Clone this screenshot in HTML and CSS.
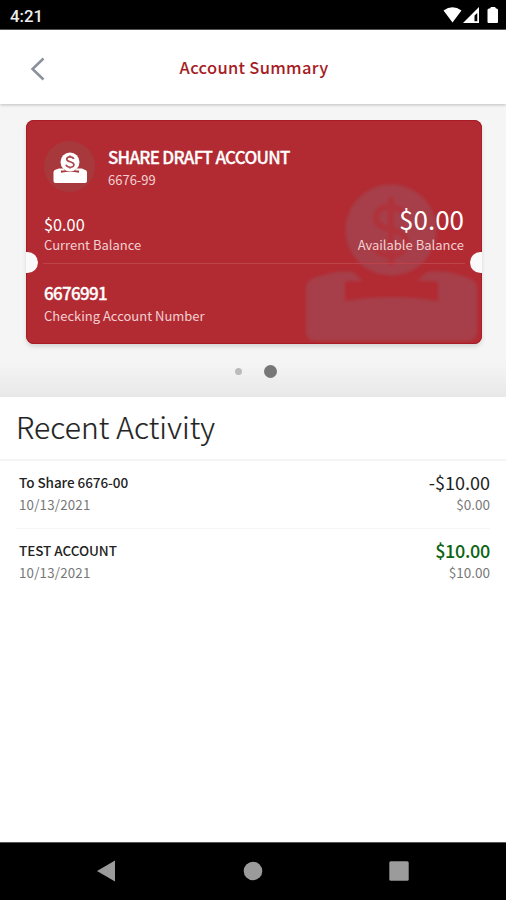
FILE: index.html
```html
<!DOCTYPE html>
<html lang="en">
<head>
<meta charset="utf-8">
<title>Account Summary</title>
<link rel="stylesheet" href="styles.css">
</head>
<body>
<div class="status">
  <span class="clock">4:21</span>
  <svg class="status-icons" width="58" height="18" viewBox="0 0 58 18">
    <path fill="#fff" d="M0.500 4.500Q9.500 -2 18.500 4.500L9.500 16.500Z"/>
    <path fill="#fff" fill-rule="evenodd" d="M36 1V17H20ZM34.300 7L31.500 9.500V15.300H34.300Z"/>
    <path fill="#fff" d="M44.500 4Q44.500 2.500 46 2.500H47L48 1H52L53 2.500H53.500Q55 2.500 55 4V16Q55 17 54 17H45.500Q44.500 17 44.500 16Z"/>
  </svg>
</div>
<header class="header">
  <svg class="back" width="16" height="24" viewBox="0 0 16 24"><path d="M13.500 1.500L2.500 12L13.500 22.500" fill="none" stroke="#8a909c" stroke-width="2.500"/></svg>
  <h1 class="title">Account Summary</h1>
</header>
<section class="summary">
  <article class="card">
    <svg class="watermark" width="178" height="162" viewBox="0 0 178 162">
      <g fill="#a63f49">
        <circle cx="88" cy="49" r="45.500"/>
        <path d="M3 106Q4 99 14 96Q36 89 50 91L60 100H45Q41 100 42 106V120Q88 112 135 120V106Q136 100 131 100H114L124 91Q146 89 162 96Q173 98 174 106V152Q172 160 165 160H12Q5 160 3 152Z"/>
      </g>
      <path d="M102 34C96 22 73 23 73 37C73 52 103 44 103 62C103 79 75 78 70 64M88 16V84" fill="none" stroke="#b0323b" stroke-width="6"/>
    </svg>
    <div class="top">
      <div class="identity">
        <span class="badge"><svg width="36" height="34" viewBox="0 0 36 34">
          <path fill="#fff" d="M1.500 20Q1.500 18 4 17.500L7 16.500H11L13 18.500H9V20.800Q18 18.500 27 20.800V18.500H23L25 16.500H30L32 17.500Q35 18 35 20.500V29Q35 31 33 31H3.500Q1.500 31 1.500 29Z"/>
          <circle cx="18" cy="10" r="9.500" fill="#fff"/>
          <path d="M21.800 7C20.700 4 14.700 4.200 14.700 7.300C14.700 10.500 21.900 9 21.900 12.700C21.900 16.200 15.200 16 14 12.800M18 3.500V5.500M18 14.500V16.500" fill="none" stroke="#a8474c" stroke-width="1.700"/>
        </svg></span>
        <div class="names"><div class="name">SHARE DRAFT ACCOUNT</div><div class="suffix">6676-99</div></div>
      </div>
      <div class="balances">
        <div class="current"><div class="current-amount">$0.00</div><div class="label">Current Balance</div></div>
        <div class="available"><div class="available-amount">$0.00</div><div class="label">Available Balance</div></div>
      </div>
    </div>
    <div class="bottom"><div class="number">6676991</div><div class="label number-label">Checking Account Number</div></div>
    <span class="notch notch-left"></span><span class="notch notch-right"></span>
  </article>
  <div class="dots"><span class="dot"></span><span class="dot active"></span></div>
</section>
<main class="activity">
  <h2 class="heading">Recent Activity</h2>
  <div class="rows">
    <div class="row">
      <div><div class="payee">To Share 6676-00</div><div class="date">10/13/2021</div></div>
      <div class="right"><div class="amount">-$10.00</div><div class="after">$0.00</div></div>
    </div>
    <div class="row">
      <div><div class="payee">TEST ACCOUNT</div><div class="date">10/13/2021</div></div>
      <div class="right"><div class="amount credit">$10.00</div><div class="after">$10.00</div></div>
    </div>
  </div>
</main>
<nav class="nav">
  <svg width="20" height="24" viewBox="0 0 20 24"><path fill="#9b9b9b" d="M1 12L19 1.500V22.500Z"/></svg>
  <svg width="20" height="20" viewBox="0 0 20 20"><circle cx="10" cy="10" r="9.300" fill="#9b9b9b"/></svg>
  <svg width="20" height="20" viewBox="0 0 20 20"><rect x="0.300" y="0.300" width="19.400" height="19.400" rx="1.500" fill="#9b9b9b"/></svg>
</nav>
</body>
</html>
```
FILE: styles.css
```css
* { box-sizing: border-box; }
body {
  margin: 0;
  height: 900px;
  display: flex;
  flex-direction: column;
  background: #fff;
  color: #222;
  font-family: "Noto Sans CJK SC", "Noto Sans", sans-serif;
  white-space: nowrap;
}
h1, h2 { margin: 0; }
.status {
  height: 30px;
  background: #000;
  border-bottom: 1px solid #555;
  display: flex;
  justify-content: space-between;
  padding: 6px 5px 0 10px;
}
.clock { font: 500 16.800px/21px Roboto, sans-serif; color: #eee; }
.header {
  height: 74px;
  display: grid;
  grid-template-columns: 60px 1fr 60px;
  align-items: center;
  box-shadow: 0 1px 3px rgba(0, 0, 0, .22);
  z-index: 1;
}
.back { margin: 4px 0 0 30px; }
.title {
  padding: 0 0 1px 2px;
  font-size: 16.5px;
  line-height: 24px;
  font-weight: 500;
  color: #a61c24;
  letter-spacing: .3px;
  text-align: center;
}
.summary {
  height: 293px;
  padding: 16px 24px 0 26px;
  background: linear-gradient(#f5f5f5 0, #f5f5f5 88%, #e8e8e8 100%);
}
.card {
  position: relative;
  height: 224px;
  border-radius: 8px;
  background: #b22b33;
  box-shadow: inset 0 0 0 1px #a91c25, 0 3px 4px rgba(0, 0, 0, .12);
  color: #fff;
}
.watermark { position: absolute; right: 1px; bottom: 1px; filter: blur(1.5px); }
.top {
  position: relative;
  height: 144px;
  margin: 0 17px;
  border-bottom: 1px solid #bd434a;
  padding: 21px 1px 0;
}
.identity { display: flex; gap: 13px; height: 62px; }
.badge {
  width: 51px;
  height: 51px;
  border-radius: 50%;
  background: #a7393d;
  display: flex;
  justify-content: center;
  padding-top: 11px;
}
.names { padding-top: 4px; }
.name { font-size: 17px; line-height: 23px; font-weight: 500; letter-spacing: -.72px; -webkit-text-stroke: .3px #fff; }
.suffix { padding-top: 1px; font-size: 13px; line-height: 21px; color: #f3cfd1; }
.balances { display: flex; justify-content: space-between; align-items: flex-end; }
.available { text-align: right; }
.current-amount { font-size: 16.3px; line-height: 24px; }
.available-amount { font-size: 26px; line-height: 31px; padding-bottom: 2px; }
.label { font-size: 13px; line-height: 18px; color: #f3cfd1; }
.bottom { position: relative; padding: 17px 18px 0; }
.number { font-size: 17px; line-height: 24px; font-weight: 500; letter-spacing: -.7px; -webkit-text-stroke: .3px #fff; }
.number-label { padding-top: 2px; }
.notch { position: absolute; top: 132px; width: 12px; height: 21px; background: #fafafa; }
.notch-left { left: 0; border-radius: 0 11px 11px 0; }
.notch-right { right: 0; border-radius: 11px 0 0 11px; }
.dots { display: flex; justify-content: center; align-items: center; gap: 22px; height: 55px; padding-left: 3px; }
.dot { width: 7px; height: 7px; border-radius: 50%; background: #bbb; }
.dot.active { width: 13px; height: 13px; background: #777; }
.activity { flex: 1; }
.heading {
  height: 64px;
  padding: 8px 16px 0;
  font-size: 30px;
  line-height: 42px;
  font-weight: 300;
  letter-spacing: .1px;
  -webkit-text-stroke: .2px #222;
  border-bottom: 2px solid #f5f5f5;
}
.rows { padding: 0 16px; }
.row {
  height: 68px;
  display: flex;
  justify-content: space-between;
  padding: 10px 0 0 3px;
  border-bottom: 1px solid #f5f5f5;
}
.row:last-child { border: 0; }
.payee { font-size: 13.500px; line-height: 22px; font-weight: 500; letter-spacing: -.05px; }
.date { padding-top: 1px; font-size: 13.300px; line-height: 22px; color: #777; letter-spacing: .2px; }
.right { text-align: right; }
.amount { font-size: 18px; line-height: 22px; }
.after { font-size: 13.500px; line-height: 22px; color: #777; }
.credit { color: #0a6413; font-weight: 500; letter-spacing: -.3px; }
.nav {
  height: 58px;
  background: #000;
  border-top: 1px solid #555;
  display: flex;
  justify-content: space-between;
  align-items: center;
  padding: 0 97px 2px 96px;
}
```
